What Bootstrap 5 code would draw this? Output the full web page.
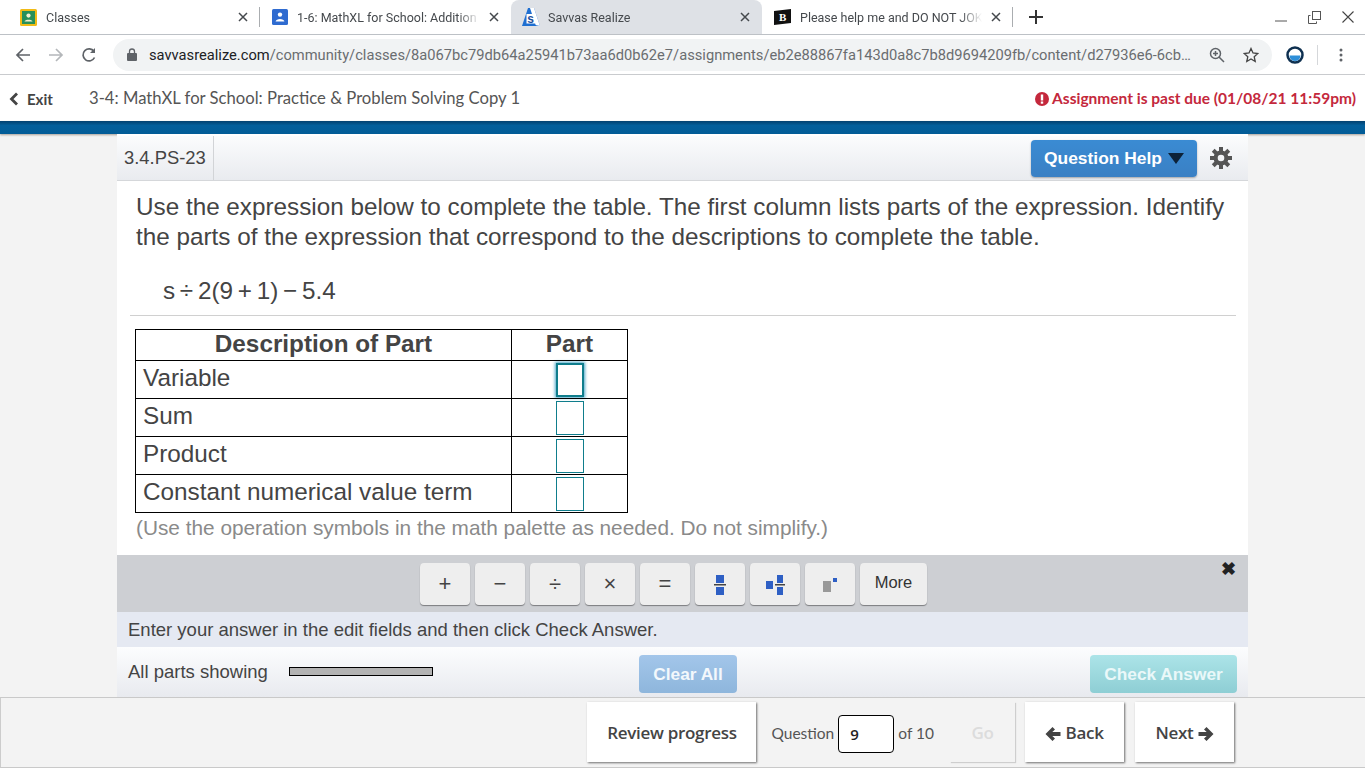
<!DOCTYPE html>
<html lang="en">
<head>
<meta charset="utf-8">
<title>Savvas Realize</title>
<link href="https://cdn.jsdelivr.net/npm/bootstrap@5.3.0/dist/css/bootstrap.min.css" rel="stylesheet">
<style>
html,body{height:768px;overflow:hidden}
body{background:#f3f3f3;font-family:"Liberation Sans",Arial,sans-serif;color:#444}
.tabstrip{height:35px;background:#fff;border-bottom:1px solid #bdc1c6;padding-left:9px;font:12.5px Roboto,sans-serif;color:#45494d}
.brtab{width:251px;height:34px;padding:0 10px 0 12px;gap:9px;position:relative}
.brtab:first-child{padding-left:11px}
.brtab.cur{background:#dee1e6;border-radius:8px 8px 0 0;width:251px;padding-left:11px;gap:8px}
.brtab.sep::after{content:"";position:absolute;right:0;top:7px;height:20px;width:1px;background:#aaadb0}
.tabname{flex:1;min-width:0;white-space:nowrap;-webkit-mask-image:linear-gradient(90deg,#000 calc(100% - 22px),transparent);mask-image:linear-gradient(90deg,#000 calc(100% - 22px),transparent)}
.tabx{margin-right:2px;flex-shrink:0}
.brtoolbar{height:40px;background:#fff;border-bottom:1px solid #c9cbce;padding:0 16px 0 15px}
.navslot{width:16px;margin-right:17px;flex-shrink:0}
.omni{width:1159px;height:32px;background:#f1f3f4;border-radius:16px;margin-left:-1px;padding:0 13px 0 14px;font:14.7px Roboto,sans-serif;color:#6a6d70;flex-shrink:0}
.omni b{font-weight:400;color:#202124}
.urltxt{white-space:nowrap;margin-left:12px}
.apphead{height:46px;background:#fff;font-family:Lato,sans-serif;padding:0 9px}
.exitlink{font-size:15px;font-weight:700;color:#444;gap:8px;width:80px;margin-top:2px}
.asgname{font-size:16.67px;color:#555}
.duenote{font-size:15.5px;font-weight:700;color:#c4283c;gap:3px;margin-left:auto;margin-top:2px}
.bluebar{height:13px;background:linear-gradient(#03416f,#035f9b 35%,#025c97);box-shadow:0 1px 2px rgba(80,60,40,.45)}
.qpanel{width:1131px;height:563px;margin:0 auto;background:#fff;padding-top:2px}
.qhead{height:45px;background:linear-gradient(#fbfcfd,#e9ebef);border-bottom:1px solid #d5d7da;padding-right:16px}
.qid{height:100%;width:97px;border-right:1px solid #d2d4d7;padding-left:7px;font-size:18.4px;color:#444;flex-shrink:0}
.helpbtn{background:linear-gradient(#3a8bd3,#3a80c4);border:0;border-radius:4px;color:#fff;font-weight:700;font-size:17.4px;width:166px;height:37px;gap:6px;box-shadow:0 1px 2px rgba(0,0,0,.3);margin-left:auto;margin-right:13px;padding:0}
.qbody{height:374px;padding:11px 12px 0 19px}
.qtext{font-size:24.27px;line-height:30px;color:#444}
.expr{font-size:24.27px;line-height:30px;margin:24px 0 0 27px;color:#444;word-spacing:-2px}
.rule{border-top:1px solid #d0d0d0;margin:9px 0 13px -6px}
.parttbl{border-collapse:collapse;width:493px;table-layout:fixed;font-size:24.3px;color:#444;margin-left:-1px}
.parttbl td,.parttbl th{border:1px solid #000;padding:0 0 4px 7px;height:38px;line-height:28px}
.parttbl th{height:31px;text-align:center;padding:0 0 2px;font-weight:700}
.parttbl td.cellc{text-align:center;padding:0}
.ansbox{display:block;margin:1px auto 0;width:28px;height:34px;border:1px solid #0f7d8c;background:#fff}
.ansbox.on{border:2px solid #0f7d8c;box-shadow:0 0 3px 1px #4ba6c8;height:34px;margin-top:0}
.hint{font-size:20.8px;color:#8a8a8a;line-height:30px}
.palette{height:57px;background:#cdcfd3;padding:8px 18px 0 0;gap:5px;position:relative}
.palbtn{width:50px;height:42px;background:#eee;border:0;border-radius:4px;box-shadow:0 1px 1px rgba(0,0,0,.4);padding:0;font-size:22px;color:#444;line-height:1}
.palbtn.wide{width:67px;font-size:16.5px;color:#333;padding-bottom:3px}
.palclose{position:absolute;right:12px;top:4px;font-size:18px;color:#222;font-weight:700;line-height:20px}
.instr{height:35px;background:#e5e9f2;padding-left:11px;font-size:18.5px;color:#444}
.qfoot{height:50px;background:linear-gradient(#fcfdfe,#e8eaef);padding:0 11px}
.partslbl{font-size:18.5px;color:#444;width:161px;margin-top:-1px}
.partsbar{width:144px;height:9px;background:#b3b3b3;border:1px solid #000;margin-top:-2px}
.clearbtn{background:linear-gradient(#a3c6ea,#8eb6dc);color:#f3f8fc;border:0;border-radius:4px;width:98px;height:38px;margin-left:206px;font-weight:700;font-size:17.3px;padding:1px 0 0;margin-top:4px}
.checkbtn{background:linear-gradient(#ace4e8,#8eced4);color:#eaf8f9;border:0;border-radius:4px;width:147px;height:38px;margin-left:auto;font-weight:700;font-size:17.3px;padding:1px 0 0;margin-top:4px}
.appfoot{height:71px;background:#f3f3f3;border-top:1px solid #c9c9c9;border-bottom:1px solid #c9c9c9;border-left:1px solid #ccc;padding:4px 131px 5px 0;font-family:"Open Sans",Lato,sans-serif;color:#444}
.footbtn{background:#fff;border:0;border-radius:0;height:60px;font-weight:600;font-size:17px;color:#444;box-shadow:1px 1px 2px rgba(0,0,0,.55);padding:1px 0 0;letter-spacing:-.3px}
.footbtn.off{background:#f3f3f3;color:#dcdcdc;box-shadow:1px 1px 1px rgba(0,0,0,.15)}
.qlabel{font-family:Lato,sans-serif;font-size:15.5px;color:#555;margin-top:3px}
.qnum{width:56px;height:38px;border:1px solid #000;border-radius:4px;background:#fff;font:600 15px "Open Sans",sans-serif;color:#222;padding:0 0 0 11px;margin-top:4px}
</style>
</head>
<body>
<div class="tabstrip d-flex">
  <div class="brtab sep d-flex align-items-center">
    <svg width="17" height="17" viewBox="0 0 17 17"><rect width="17" height="17" rx="1.500" fill="#f1bb16"/><rect x="2" y="2" width="13" height="13" fill="#27905a"/><circle cx="8.500" cy="6.600" r="2.100" fill="#f5f0d0"/><path d="M4.500 12.500c.4-2.400 7.600-2.400 8 0z" fill="#f5f0d0"/></svg>
    <span class="tabname">Classes</span>
    <svg class="tabx" width="10" height="10" viewBox="0 0 10 10"><path d="M1 1l8 8M9 1l-8 8" stroke="#45494d" stroke-width="1.500"/></svg>
  </div>
  <div class="brtab d-flex align-items-center">
    <svg width="16" height="16" viewBox="0 0 16 16"><rect width="16" height="16" rx="1.500" fill="#2f6bd0"/><circle cx="8" cy="5.600" r="2.200" fill="#fff"/><path d="M3.600 12.500c.3-3.400 8.500-3.400 8.800 0z" fill="#fff"/></svg>
    <span class="tabname">1-6: MathXL for School: Addition</span>
    <svg class="tabx" width="10" height="10" viewBox="0 0 10 10"><path d="M1 1l8 8M9 1l-8 8" stroke="#45494d" stroke-width="1.500"/></svg>
  </div>
  <div class="brtab cur d-flex align-items-center">
    <svg width="18" height="18" viewBox="0 0 18 18"><path d="M6 0h6l6 18H0z" fill="#1f6fd1"/><path d="M8 0h4l6 18h-4z" fill="#fff"/><rect x="4.500" y="6" width="9" height="9.500" fill="#fff"/><text x="5.300" y="14.500" font-family="Liberation Sans" font-weight="700" font-size="12" fill="#1c4f9c">s</text><path d="M0 18l5-1h8l5 1z" fill="#1f6fd1"/></svg>
    <span class="tabname">Savvas Realize</span>
    <svg class="tabx" width="10" height="10" viewBox="0 0 10 10"><path d="M1 1l8 8M9 1l-8 8" stroke="#45494d" stroke-width="1.500"/></svg>
  </div>
  <div class="brtab sep d-flex align-items-center">
    <svg width="17" height="16" viewBox="0 0 17 16"><path d="M0 2l17-2v14L0 16z" fill="#111"/><text x="5" y="12" font-family="Liberation Serif" font-weight="700" font-size="11" fill="#fff">B</text></svg>
    <span class="tabname">Please help me and DO NOT JOK</span>
    <svg class="tabx" width="10" height="10" viewBox="0 0 10 10"><path d="M1 1l8 8M9 1l-8 8" stroke="#45494d" stroke-width="1.500"/></svg>
  </div>
  <svg class="align-self-center" style="margin-left:16px" width="14" height="14" viewBox="0 0 14 14"><path d="M7 0v14M0 7h14" stroke="#333" stroke-width="2"/></svg>
  <div class="ms-auto d-flex align-items-center" style="padding-right:11px;gap:21px">
    <svg width="12" height="12" viewBox="0 0 12 12"><path d="M0 10h12" stroke="#555" stroke-width="1"/></svg>
    <svg width="13" height="13" viewBox="0 0 13 13" fill="none" stroke="#555"><rect x="4.500" y=".5" width="8" height="8"/><path d="M2.500 4.500h-2v8h8v-2"/></svg>
    <svg width="12" height="12" viewBox="0 0 12 12"><path d="M.5.5l11 11M11.500.5l-11 11" stroke="#444" stroke-width="1.100"/></svg>
  </div>
</div>

<div class="brtoolbar d-flex align-items-center">
  <svg class="navslot" height="16" viewBox="0 0 16 16" fill="none" stroke="#5f6368" stroke-width="1.700"><path d="M15 8H2M8 2L2 8l6 6"/></svg>
  <svg class="navslot" height="16" viewBox="0 0 16 16" fill="none" stroke="#b4b7ba" stroke-width="1.700"><path d="M1 8h13M8 2l6 6-6 6"/></svg>
  <svg class="navslot" height="16" viewBox="0 0 16 16" fill="none" stroke="#5f6368" stroke-width="1.700"><path d="M13.500 10.500A6 6 0 1 1 13 4.500"/><path d="M14 1v5H9z" fill="#5f6368" stroke="none"/></svg>
  <div class="omni d-flex align-items-center">
    <svg class="flex-shrink-0" width="10" height="13" viewBox="0 0 10 13"><rect y="5" width="10" height="8" rx="1" fill="#5f6368"/><path d="M2.500 5.500V3.500a2.500 2.500 0 0 1 5 0v2" fill="none" stroke="#5f6368" stroke-width="1.300"/></svg>
    <div class="urltxt"><b>savvasrealize.com</b>/community/classes/8a067bc79db64a25941b73aa6d0b62e7/assignments/eb2e88867fa143d0a8c7b8d9694209fb/content/d27936e6-6cb…</div>
    <svg class="ms-auto flex-shrink-0" style="margin-right:18px" width="16" height="16" viewBox="0 0 16 16" fill="none" stroke="#5f6368" stroke-width="1.500"><circle cx="6.500" cy="6.500" r="5"/><path d="M10 10l5 5M6.500 4v5M4 6.500h5"/></svg>
    <svg class="flex-shrink-0" width="16" height="16" viewBox="0 0 16 16" fill="none" stroke="#444" stroke-width="1.300"><path d="M8 1.500l2 4.500 4.800.5-3.600 3.200 1 4.800L8 12l-4.200 2.500 1-4.800L1.200 6.500 6 6z"/></svg>
  </div>
  <svg style="margin-left:14px" width="18" height="18" viewBox="0 0 18 18"><circle cx="9" cy="9" r="7.500" fill="#fff" stroke="#0e3050" stroke-width="2.500"/><path d="M3.500 9.500h11a5.500 5.500 0 0 1-11 0z" fill="#2f8fd8"/></svg>
  <div style="width:1px;height:20px;background:#d5d7da;margin-left:13px"></div>
  <svg style="margin-left:21px" width="4" height="14" viewBox="0 0 4 14"><circle cx="2" cy="2" r="1.500" fill="#5f6368"/><circle cx="2" cy="7" r="1.500" fill="#5f6368"/><circle cx="2" cy="12" r="1.500" fill="#5f6368"/></svg>
</div>

<div class="apphead d-flex align-items-center">
  <div class="exitlink d-flex align-items-center">
    <svg width="10" height="14" viewBox="0 0 10 14"><path d="M8 1.500L2.500 7 8 12.500" fill="none" stroke="#444" stroke-width="2.800"/></svg>
    Exit
  </div>
  <div class="asgname">3-4: MathXL for School: Practice &amp; Problem Solving Copy 1</div>
  <div class="duenote d-flex align-items-center">
    <svg width="14" height="14" viewBox="0 0 14 14"><circle cx="7" cy="7" r="7" fill="#c4283c"/><rect x="5.800" y="2.500" width="2.400" height="6" fill="#fff"/><rect x="5.800" y="9.500" width="2.400" height="2.200" fill="#fff"/></svg>
    Assignment is past due (01/08/21 11:59pm)
  </div>
</div>
<div class="bluebar"></div>

<div class="qpanel">
  <div class="qhead d-flex align-items-center">
    <div class="qid d-flex align-items-center">3.4.PS-23</div>
    <button class="helpbtn d-flex align-items-center justify-content-center" type="button">Question Help
      <svg width="16" height="11" viewBox="0 0 16 11"><path d="M0 0h16L8 11z" fill="#0d2238"/></svg>
    </button>
    <svg width="22" height="22" viewBox="0 0 22 22" fill="#555"><path fill-rule="evenodd" d="M11 3.500a7.500 7.500 0 1 0 0 15 7.500 7.500 0 0 0 0-15zm0 4.200a3.300 3.300 0 1 1 0 6.600 3.300 3.300 0 0 1 0-6.600z"/><g><rect x="9" y="0" width="4" height="5"/><rect x="9" y="17" width="4" height="5"/><rect x="0" y="9" width="5" height="4"/><rect x="17" y="9" width="5" height="4"/><rect x="9" y="0" width="4" height="5" transform="rotate(45 11 11)"/><rect x="9" y="0" width="4" height="5" transform="rotate(135 11 11)"/><rect x="9" y="0" width="4" height="5" transform="rotate(225 11 11)"/><rect x="9" y="0" width="4" height="5" transform="rotate(315 11 11)"/></g></svg>
  </div>
  <div class="qbody">
    <div class="qtext">Use the expression below to complete the table. The first column lists parts of the expression. Identify the parts of the expression that correspond to the descriptions to complete the table.</div>
    <div class="expr">s ÷ 2(9 + 1) − 5.4</div>
    <div class="rule"></div>
    <table class="parttbl">
      <colgroup><col style="width:376px"><col></colgroup>
      <tr><th>Description of Part</th><th>Part</th></tr>
      <tr><td>Variable</td><td class="cellc"><span class="ansbox on"></span></td></tr>
      <tr><td>Sum</td><td class="cellc"><span class="ansbox"></span></td></tr>
      <tr><td>Product</td><td class="cellc"><span class="ansbox"></span></td></tr>
      <tr><td>Constant numerical value term</td><td class="cellc"><span class="ansbox"></span></td></tr>
    </table>
    <div class="hint">(Use the operation symbols in the math palette as needed. Do not simplify.)</div>
  </div>
  <div class="palette d-flex justify-content-center">
    <button class="palbtn" type="button">+</button>
    <button class="palbtn" type="button">−</button>
    <button class="palbtn" type="button">÷</button>
    <button class="palbtn" type="button">×</button>
    <button class="palbtn" type="button">=</button>
    <button class="palbtn" type="button"><svg width="12" height="20" viewBox="0 0 12 20"><rect x="2" width="8" height="8" fill="#2e5fc4"/><rect y="9" width="12" height="1.500" fill="#444"/><rect x="2" y="12" width="8" height="8" fill="#2e5fc4"/></svg></button>
    <button class="palbtn" type="button"><svg width="19" height="20" viewBox="0 0 19 20"><rect y="6" width="7" height="8" fill="#2e5fc4"/><rect x="11" width="6" height="8" fill="#2e5fc4"/><rect x="9" y="9" width="10" height="1.500" fill="#444"/><rect x="11" y="12" width="6" height="8" fill="#2e5fc4"/></svg></button>
    <button class="palbtn" type="button"><svg width="14" height="14" viewBox="0 0 14 14"><rect y="3" width="8" height="11" fill="#999"/><rect x="10" width="4" height="4" fill="#2e5fc4"/></svg></button>
    <button class="palbtn wide" type="button">More</button>
    <span class="palclose">✖</span>
  </div>
  <div class="instr d-flex align-items-center">Enter your answer in the edit fields and then click Check Answer.</div>
  <div class="qfoot d-flex align-items-center">
    <span class="partslbl">All parts showing</span>
    <span class="partsbar"></span>
    <button class="clearbtn" type="button">Clear All</button>
    <button class="checkbtn" type="button">Check Answer</button>
  </div>
</div>

<div class="appfoot d-flex justify-content-end align-items-center">
  <button class="footbtn" style="width:169px" type="button">Review progress</button>
  <span class="qlabel" style="margin-left:15px">Question</span>
  <input class="qnum" style="margin-left:4px" type="text" value="9" aria-label="Question number">
  <span class="qlabel" style="margin-left:4px">of 10</span>
  <button class="footbtn off" style="width:65px;margin-left:16px" type="button">Go</button>
  <button class="footbtn" style="width:99px;margin-left:10px" type="button"><svg width="16" height="14" viewBox="0 0 15 14"><path d="M7 0l2.500 2.500L6.800 5H15v4H6.800l2.700 2.500L7 14 0 7z" fill="#444"/></svg> Back</button>
  <button class="footbtn" style="width:99px;margin-left:11px" type="button">Next <svg width="16" height="14" viewBox="0 0 15 14"><path d="M8 0L5.500 2.500 8.200 5H0v4h8.200l-2.700 2.500L8 14l7-7z" fill="#444"/></svg></button>
</div>
</body>
</html>
